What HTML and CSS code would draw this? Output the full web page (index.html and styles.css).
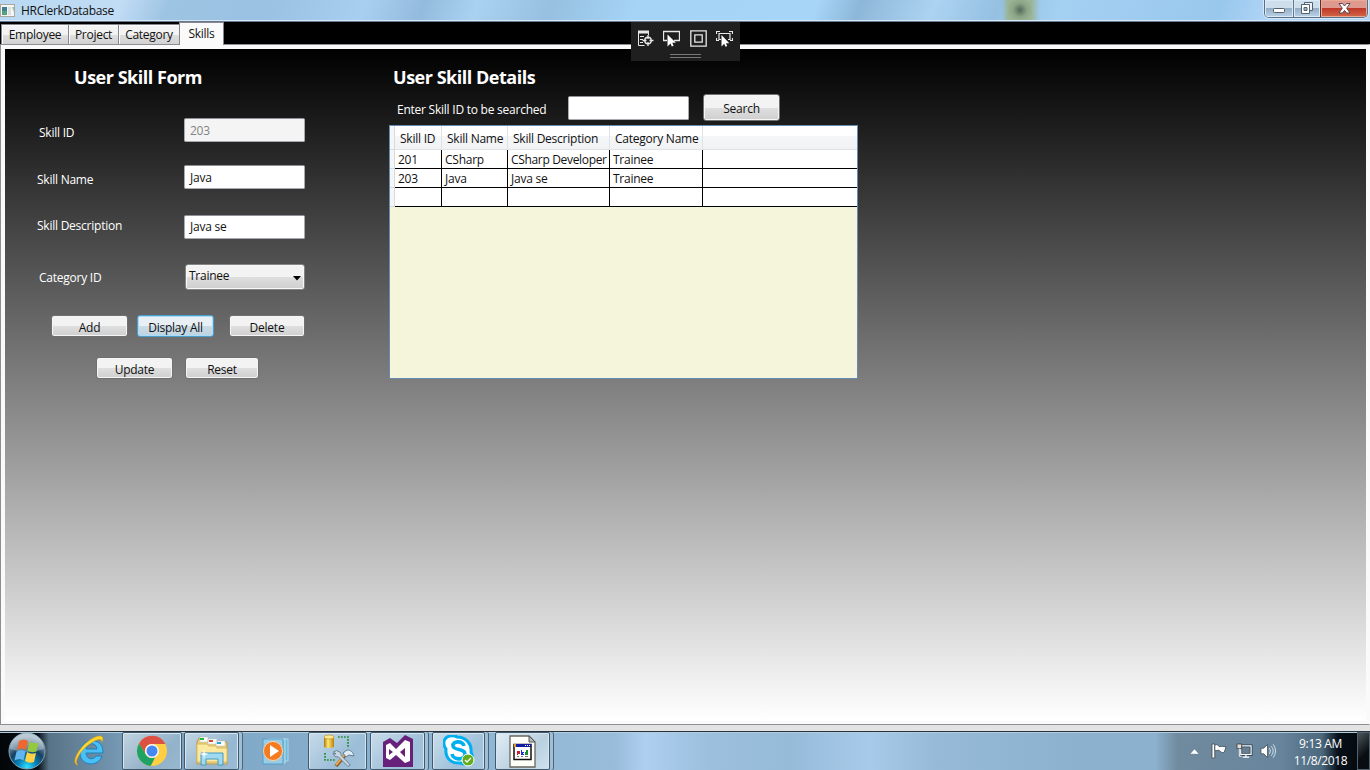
FILE: index.html
```html
<!DOCTYPE html>
<html lang="en">
<head>
<meta charset="utf-8">
<title>HRClerkDatabase</title>
<link rel="stylesheet" href="styles.css">
</head>
<body>
<div class="desktop">
  <header class="titlebar">
    <svg class="app-icon" width="16" height="14" viewBox="0 0 16 14"><rect x=".5" y=".5" width="14" height="12" fill="#f5f5f5" stroke="#aaa79f"/><path d="M2 3h5v8H2z" fill="#3f7f96"/><path d="M2 7h5v4H2z" fill="#52a17f"/><path d="M8 3h3v8H8z" fill="#dedede"/><path d="M12 3h2v5z" fill="#8fc4a6"/></svg>
    <span class="app-title">HRClerkDatabase</span>
    <div class="caption">
      <span class="cap min"><svg width="13" height="6"><rect x=".5" y=".5" width="11" height="4" rx="1" fill="#fff" stroke="#53606e"/></svg></span>
      <span class="cap max"><svg width="12" height="12"><path d="M3.500 3V.5h8v8H9" fill="#eef4fa" stroke="#53606e"/><path d="M.5 2.500h8v9h-8z" fill="#fff" stroke="#53606e"/><path d="M3 5.500h3v3H3z" fill="#9fb2c6" stroke="#53606e"/></svg></span>
      <span class="cap close"><svg width="13" height="11" viewBox="0 0 13 11"><path d="M1 .5h3.500l2 2.500 2-2.500H12L8.700 5.200 12 10H8.500l-2-2.600-2 2.600H1l3.300-4.800z" fill="#fff" stroke="#5b4650"/></svg></span>
    </div>
  </header>

  <nav class="tabs">
    <span class="tab employee">Employee</span><span class="tab project">Project</span><span class="tab category">Category</span><span class="tab active">Skills</span>
  </nav>

  <div class="debugbar">
    <div class="debug-icons">
      <svg width="17" height="17" viewBox="0 0 17 17" fill="none" stroke="#e8e8e8"><path d="M1.500 1v14.500h6M11.500 1v4"/><path d="M1 2h11" stroke-width="3"/><path d="M3 6.500h4M3 9.500h3M3 12.500h3"/><circle cx="11" cy="10.500" r="3.200" stroke-width="1.400"/><path d="M11 5v4M11 12v4M5.500 10.500h4M12.500 10.500h4" stroke-width="1.300"/></svg>
      <svg width="17" height="17" viewBox="0 0 17 17"><path d="M4 10.500H.5v-9h16v9H11" fill="none" stroke="#e8e8e8" stroke-width="1.300"/><path d="M4.500 4.500v12l3-3 1.300 3 1.800-.8-1.300-2.900h3.600z" fill="#fff"/></svg>
      <svg width="17" height="17" viewBox="0 0 17 17" fill="none" stroke="#e8e8e8" stroke-width="1.300"><path d="M.8.800h15.400v15.400H.8zM4.800 4.800h7.400v7.400H4.800z"/></svg>
      <svg width="17" height="17" viewBox="0 0 17 17"><path d="M.5 4V1.500H4M13 1.500h3.500V4M.5 8v2.500H3M16.500 8v2.500H14M5 9.500H3v-6h11v6h-2" fill="none" stroke="#e8e8e8" stroke-width="1.200"/><path d="M5.500 5v11.500l2.700-2.700 1.300 3 1.700-.8-1.300-2.800h3.400z" fill="#fff"/></svg>
    </div>
    <div class="grip"></div>
  </div>

  <main class="tabpage">
    <div class="content">
      <section class="form">
        <h1 class="form-title">User Skill Form</h1>
        <div class="field id"><label class="indent">Skill ID</label><div class="textbox disabled">203</div></div>
        <div class="field name"><label>Skill Name</label><div class="textbox">Java</div></div>
        <div class="field desc"><label>Skill Description</label><div class="textbox">Java se</div></div>
        <div class="field cat"><label class="indent">Category ID</label><div class="combo"><span>Trainee</span><svg width="8" height="5"><path d="M0 0h8L4 4.500z" fill="#000"/></svg></div></div>
        <div class="buttons first"><span class="btn">Add</span><span class="btn hot">Display All</span><span class="btn del">Delete</span></div>
        <div class="buttons second"><span class="btn">Update</span><span class="btn reset">Reset</span></div>
      </section>
      <section class="details">
        <h1 class="details-title">User Skill Details</h1>
        <div class="search"><label>Enter Skill ID to be searched</label><div class="textbox query"></div><span class="btn search-btn">Search</span></div>
        <div class="datagrid">
          <div class="row head"><i></i><span>Skill ID</span><span>Skill Name</span><span>Skill Description</span><span>Category Name</span><span></span></div>
          <div class="row"><i></i><span>201</span><span>CSharp</span><span class="dev">CSharp Developer</span><span>Trainee</span><span></span></div>
          <div class="row"><i></i><span>203</span><span>Java</span><span>Java se</span><span>Trainee</span><span></span></div>
          <div class="row"><i></i><span></span><span></span><span></span><span></span><span></span></div>
        </div>
      </section>
    </div>
  </main>
  <div class="window-edge"></div>

  <footer class="taskbar">
    <div class="start"><svg width="38" height="38" viewBox="0 0 38 38">
      <defs><radialGradient id="orb" cx=".5" cy=".95" r=".85"><stop offset="0" stop-color="#35e2ff"/><stop offset=".3" stop-color="#0784bd"/><stop offset=".6" stop-color="#173f62"/><stop offset="1" stop-color="#a7b9c7"/></radialGradient></defs>
      <circle cx="19" cy="19" r="18" fill="url(#orb)" stroke="#80a4b5"/><path d="M2 17a17 16 0 0 1 34 0q-17 6-34 0z" fill="#d7e3ec" opacity=".4"/>
      <path d="M11 9q5-3 9 0l-2 9q-4-3-9 0z" fill="#ed6830"/><path d="M21.500 9.500q4 3 9 1l-2 9q-5 2-9-1z" fill="#94c83e"/><path d="M8.500 19.500q5-3 9 0l-2 9q-4-3-9 0z" fill="#62b5ed"/><path d="M19 20q4 3 9 1l-2 9q-5 2-9-1z" fill="#ffd245"/>
    </svg></div>
    <div class="task ie"><svg width="34" height="34" viewBox="0 0 34 34"><path d="M30 19H13c.5 7 8 7 10 3h6c-4 12-22 10-22-3C7 3 31 2 30 19zM13 15h11c-.5-7-10-7-11 0z" fill="#48bff5" stroke="#227fba"/><path d="M5 31c-8-1 1-18 12-25 9-6 15-5 12 2 0-4-5-3-11 1C7 16 0 29 5 31z" fill="#ffd52e" stroke="#dfa411" stroke-width=".7"/></svg></div>
    <div class="task framed chrome"><svg width="32" height="32" viewBox="0 0 32 32"><circle cx="16" cy="16" r="15" fill="#ffce43"/><path d="M3 8.500A15 15 0 0 1 29.500 9H16a7 7 0 0 0-6.500 10z" fill="#dc5144"/><path d="M3 8.500 9.900 19.500a7 7 0 0 0 9.400 2.600L14.700 31A15 15 0 0 1 3 8.500z" fill="#1ea362"/><circle cx="16" cy="16" r="7" fill="#f7f7f7"/><circle cx="16" cy="16" r="5.500" fill="#4587f3"/></svg></div>
    <div class="task framed stack explorer"><svg width="34" height="32" viewBox="0 0 34 32"><path d="M2 7l2-4h8l2 2h8l1 2h9v22H2z" fill="#e8cf7c" stroke="#bb9850"/><path d="M5 2h8v5H5zM13 4h9v5h-9zM21 6h9v5h-9z" fill="#fff" stroke="#bbb" stroke-width=".5"/><path d="M5 3h4v2H5z" fill="#19bd36"/><path d="M14 5h4v2h-4z" fill="#db4731"/><path d="M22 7h4v2h-4z" fill="#27a4df"/><path d="M2 9h10l2 2h7l1 2h10v14H2z" fill="#fae99f" stroke="#d8bb66"/><path d="M6 18h22v12h-5v-6H11v6H6z" fill="#9ed9f1" stroke="#459ac2"/><path d="m9 13 .7 5 4 1-4 1-.7 5-.7-5-4-1 4-1z" fill="#fff"/></svg></div>
    <div class="task wmp"><svg width="32" height="30" viewBox="0 0 32 30"><path d="M9 3h18v22H9z" fill="#71b7d8" stroke="#a8d8ed"/><path d="M6 3h18v24H6z" fill="#82c1df" stroke="#b7e0ef"/><path d="M2 3h20v25H2z" fill="#9bcce5" stroke="#549ec8"/><circle cx="12" cy="15" r="9.500" fill="#f47b20" stroke="#ffd3a6"/><path d="m9 9 9 6-9 6z" fill="#fff"/></svg></div>
    <div class="task framed tools"><svg width="34" height="34" viewBox="0 0 34 34"><defs><linearGradient id="gold"><stop stop-color="#ad7605"/><stop offset=".4" stop-color="#ffe779"/><stop offset="1" stop-color="#bd8106"/></linearGradient></defs><path d="M3 3v10q5 2 10 0V3z" fill="url(#gold)"/><ellipse cx="8" cy="3" rx="5" ry="2" fill="#ffe991" stroke="#b58a20" stroke-width=".6"/><path d="M17 3h10v11M4 19v7h11" fill="none" stroke="#248b35" stroke-width="1.700" stroke-dasharray="1.700 1.300"/><path d="m15 32 10-12" stroke="#8a5419" stroke-width="3.500"/><path d="m15 31 10-12" stroke="#e7a84c" stroke-width="2"/><path d="m22 19 4-3c4 0 6 2 7 6l-5-1-3 2z" fill="#ddecf6" stroke="#66788c"/><path d="m12.500 18 3-1.500 4 2 .8 3 9 9.500-2.300 1.500-9.500-9.500-3.500-.5-2-3 3 .5z" fill="#c9d7e2" stroke="#586e84" stroke-width=".8"/></svg></div>
    <div class="task framed stack vs"><svg width="32" height="34" viewBox="0 0 32 34"><path d="M1 8 8 4l7 5L23 1l8 4v28H1z" fill="#68217a"/><path d="M4 11 8 9l6 6 9-9 5 2v19l-5 2-9-8-6 5-4-2zM7 15v6l4-3zm16-1-5 4 5 5z" fill="#fff" fill-rule="evenodd"/></svg></div>
    <div class="task framed stack skype"><svg width="32" height="32" viewBox="0 0 32 32"><path d="M2 4C5 0 11 0 14 2c9 0 15 7 14 15 4 8-3 14-10 11C8 29 2 23 3 14 1 11 0 7 2 4z" fill="#fff" stroke="#00aff0" stroke-width="3"/><path d="M21 11c-1-6-12-5-11 0 1 5 12 2 12 8 0 7-12 6-13 0" fill="none" stroke="#00aff0" stroke-width="3.600"/><circle cx="25" cy="25" r="6" fill="#62ad1c" stroke="#fff"/><path d="m22 25 2 2 4-4" fill="none" stroke="#fff" stroke-width="1.300"/></svg></div>
    <div class="task framed stack current"><svg width="27" height="33" viewBox="0 0 27 33"><path d="M1 1h19l6 6v25H1z" fill="#fffffa" stroke="#686860" stroke-width="1.300"/><path d="M20 1v6h6z" fill="#bbb" stroke="#555"/><path d="M5 9.500h17v15H5z" fill="#fff" stroke="#111" stroke-width="1.500"/><path d="M5 9h17v3H5z" fill="#111ba3"/><path d="M16 10.500h1m1 0h1m1 0h1" stroke="#fff"/><path d="M5 9h2v3H5z" fill="#d3a329"/><path d="M8 16h3v3H9v1H8z" fill="#c91f2c"/><path d="M12 15h1v2h2v1h-1v1h1v1h-3z" fill="#1e2bdb"/><path d="M16 17h1v-2h2v5h-3z" fill="#198c32"/><path d="M8 21.500h2m2 0h2m2 0h3" stroke="#777"/></svg></div>
    <div class="tray">
      <svg class="arrow" width="9" height="5"><path d="M0 5h9L4.500 0z" fill="#fff" stroke="#4b5c69" stroke-width=".3"/></svg>
      <svg class="flag" width="17" height="16" viewBox="0 0 18 17"><path d="M1 1h3v15H1z" fill="#fff" stroke="#49545e"/><path d="M4 2c3-1 4 1 5 2 2-1 4 0 7 0l-2 6c-3 1-4-1-5-2-2-1-3 1-5 0z" fill="#fff" stroke="#49545e"/></svg>
      <svg class="net" width="17" height="16" viewBox="0 0 18 17"><path d="M5 3h11v9H5z" fill="#667f92" stroke="#293d4c" stroke-width="3"/><path d="M5 3h11v9H5zM7 15h7M10.500 12v3" fill="none" stroke="#fff" stroke-width="1.300"/><path d="M1 1h5v5H1z" fill="#ddd" stroke="#444"/><path d="M3.500 6v8H6" fill="none" stroke="#fff"/></svg>
      <svg class="sound" width="17" height="16" viewBox="0 0 18 16"><path d="M1 5h3l4-4v14l-4-4H1z" fill="#fff" stroke="#4f5b66"/><path d="M10 5q2 3 0 6M12 3q4 5 0 10M14 1q5 7 0 14" fill="none" stroke="#dce7ee"/></svg>
      <div class="clock"><span>9:13 AM</span><span>11/8/2018</span></div>
      <div class="show-desktop"></div>
    </div>
  </footer>
</div>
</body>
</html>
```
FILE: styles.css
```css
* { box-sizing: border-box; }
body { margin: 0; font: 12px/16px "Open Sans", "Noto Sans", sans-serif; letter-spacing: -0.24px; color: #111; }
svg { display: block; flex: none; }
h1, label { margin: 0; white-space: nowrap; }
.desktop { position: relative; width: 1370px; height: 770px; overflow: hidden; display: flex; flex-direction: column; background: #000; }
.titlebar {
  height: 22px; flex: none; display: flex;
  border-bottom: 1px solid #667b93; box-shadow: inset 0 -1px #d9e8f7;
  background:
    radial-gradient(circle at 1020px 10px, #52695a 0, #8ca486 7px, transparent 13px),
    linear-gradient(90deg, transparent 1002px, #9ab595 1008px, #9ab595 1031px, transparent 1040px),
    radial-gradient(ellipse at 1050px 13px, #779fcf 0, transparent 12px),
    linear-gradient(110deg, #b9d8f1 0, #c1dcf5 115px, #9ec4e3 160px, #9bc1e3 260px, #a9cff0 345px, #93bbdd 400px, #a9d1f0 450px, #97c0e0 520px, #a5d4f6 600px, #a6d5f7 770px, #8db7d9 810px, #acd3f1 880px, #95c0e2 940px, #a4d0f2 1000px, #99c8ed 1150px, #b1d5f6 1200px, #b3d4f4 1370px);
}
.app-icon { margin-top: 4px; }
.app-title { margin: 3px 0 0 5px; letter-spacing: -.31px; }
.caption { margin-left: auto; margin-right: 2px; width: 104px; height: 18px; display: flex; border: 1px solid #596f86; border-top: 0; border-radius: 0 0 5px 5px; overflow: hidden; box-shadow: 0 0 0 1px #d6e8fa; }
.cap { display: flex; align-items: center; justify-content: center; background: linear-gradient(#cedeeb 0 45%, #91abc3 46%, #bbd2e8); box-shadow: inset 0 0 0 1px #dbeaf7; }
.min { width: 28px; padding-top: 4px; }
.max { width: 27px; border-left: 1px solid #61768b; padding-bottom: 2px; }
.close { flex: 1; border-left: 1px solid #642e2d; background: linear-gradient(#df9a8f 0 45%, #bd3527 46%, #d36848); box-shadow: inset 0 0 0 1px #eaa994; padding-bottom: 1px; }
.tabs { height: 22px; flex: none; display: flex; align-items: flex-end; padding-left: 1px; }
.tab { height: 20px; border: 1px solid #85878d; border-bottom: 0; background: linear-gradient(#f3f3f3 0 50%, #dfdfdf 51%, #d1d1d1); box-shadow: inset 1px 1px #fbfbfb; text-align: center; padding-top: 2px; letter-spacing: -.27px; }
.employee { width: 68px; }
.project { width: 51px; margin-left: -1px; }
.category { width: 62px; margin-left: -1px; }
.tab.active { width: 45px; height: 23px; margin: 0 0 -1px -1px; background: #fafafa; padding-top: 3px; z-index: 1; }
.debugbar { position: absolute; z-index: 3; left: 631px; top: 22px; width: 109px; height: 39px; background: #1f1f1f; padding: 8px 7px 0 6px; }
.debug-icons { display: flex; justify-content: space-between; }
.grip { width: 31px; height: 4px; margin: 7px auto 0; border-top: 1px solid #777; border-bottom: 1px solid #777; }
.tabpage { height: 681px; flex: none; border: 1px solid #8c8e94; border-right-color: #fafafa; background: #fafafa; padding: 4px 3px 3px 4px; }
.content { height: 672px; display: flex; background: linear-gradient(#000, #fff); }
.window-edge { height: 6px; flex: none; background: #e3e3e3; }
.form { width: 384px; flex: none; display: flex; flex-direction: column; color: #fff; }
.form-title, .details-title { font-size: 18px; line-height: 24px; font-weight: 700; color: #fff; letter-spacing: -.48px; }
.form-title { margin: 16px 0 0 69px; }
.field { display: flex; padding-left: 32px; height: 24px; }
.field label { width: 147px; padding-top: 7px; }
.field .indent { padding-left: 2px; }
.id { margin-top: 29px; }
.name { margin-top: 23px; }
.desc { margin-top: 26px; }
.desc label { padding-top: 3px; }
.cat { margin-top: 25px; height: 26px; }
.cat label { padding-top: 6px; }
.textbox { width: 121px; height: 24px; border: 1px solid #a7abb0; border-top-color: #8d9197; border-radius: 2px; background: #fff; color: #111; padding: 4px 5px; }
.desc .textbox { padding-top: 3px; }
.textbox.disabled { background: #f4f4f4; color: #838383; }
.combo { width: 120px; margin-left: 1px; height: 26px; display: flex; justify-content: space-between; padding: 3px 3px 0 3px; border: 1px solid #858585; border-radius: 3px; color: #111; background: linear-gradient(#f3f3f3 0 50%, #dedede 51%, #cecece); box-shadow: inset 0 0 0 1px #f8f8f8; }
.combo svg { margin-top: 8px; }
.buttons { display: flex; }
.first { margin: 25px 0 0 46px; }
.second { margin: 20px 0 0 91px; }
.btn { width: 77px; height: 22px; flex: none; border: 1px solid #707070; border-radius: 3px; background: linear-gradient(#f3f3f3 0 50%, #dfdfdf 51%, #cfcfcf); box-shadow: inset 0 0 0 1px #f5f5f5; color: #111; text-align: center; padding-top: 3px; }
.buttons .btn { padding-top: 4px; }
.hot { margin-left: 9px; border-color: #4d9ccc; box-shadow: inset 0 0 0 1px #a9ddfa; background: linear-gradient(#e9f0f5 0 50%, #cadbe5 51%, #bfd3df); }
.del { width: 76px; margin-left: 15px; }
.reset { width: 74px; margin-left: 12px; }
.details { width: 469px; flex: none; }
.details-title { margin: 16px 0 0 4px; }
.search { height: 36px; display: flex; padding: 5px 0 0 8px; color: #fff; }
.search label { width: 171px; padding-top: 8px; }
.query { margin-top: 2px; height: 24px; }
.search-btn { margin-left: 14px; height: 27px; padding-top: 6px; }
.datagrid { height: 254px; border: 1px solid #688caf; background: #f5f5dc; }
.row { height: 19px; display: grid; grid-template-columns: 5px 47px 66px 102px 93px 1fr; line-height: 18px; background: #fff; }
.row span, .row i { white-space: nowrap; border-bottom: 1px solid #000; }
.row i { background: #f5f6f8; border-right: 1px solid #d5dbe1; border-bottom-color: #d4d9df; }
.row span { height: 19px; padding: 1px 0 0 3px; border-right: 1px solid #000; }
.row .dev { letter-spacing: -.33px; }
.row span:last-child { border-right: 0; }
.row.head { height: 24px; background: linear-gradient(#fff 0 40%, #f5f6f8 41%, #f0f2f4); }
.row.head span { height: 24px; padding: 4px 0 0 5px; border-color: #dfe2e6; }
.taskbar {
  height: 39px; flex: none; display: flex; border-top: 1px solid #26333e; box-shadow: inset 0 1px #b4cddd;
  background: linear-gradient(90deg, #030608 0, #071019 38px, #587386 49px, #7598b3 120px, #81a9c8 245px, #8fb6d3 470px, #98bcda 615px, #afcff0 645px, #9bbfdd 710px, #96bbd9 790px, #a8caea 870px, #96bad7 935px, #8bb1ce 1080px, #8cb1cf 1155px, #708a9e 1178px, #67859d 1280px, #4c687d 1322px, #071019 1338px, #020609 1370px);
}
.start { width: 53px; padding-left: 8px; }
.task { display: flex; justify-content: center; align-items: center; flex: none; }
.framed { border: 1px solid #415a6d; border-radius: 2px; box-shadow: inset 1px 1px #d6e5ef, inset -1px 0 #d6e5ef; background: linear-gradient(135deg, rgba(235,244,250,.65), rgba(196,218,234,.32) 65%, rgba(200,223,240,.38)); }
.stack { box-shadow: inset 1px 1px #d6e5ef, inset -1px 0 #d6e5ef, 3px 0 #9fbfd5, 4px 0 #4d6579; }
.ie { width: 69px; padding-left: 4px; }
.chrome { width: 60px; }
.explorer { width: 55px; margin-left: 2px; }
.wmp { width: 66px; margin-left: 4px; padding-left: 2px; }
.tools { width: 59px; margin-left: -1px; }
.vs { width: 55px; margin-left: 3px; }
.skype { width: 53px; margin-left: 7px; }
.current { width: 55px; margin-left: 10px; background: linear-gradient(135deg, #e1edf5, #b9d0e0 60%, #d0e1ee); }
.tray { margin-left: auto; display: flex; align-items: center; color: #fff; }
.flag { margin-left: 12px; }
.net { margin-left: 8px; }
.sound { margin-left: 7px; }
.clock { width: 63px; margin-left: 12px; margin-right: 5px; display: flex; flex-direction: column; text-align: center; line-height: 17px; padding-top: 1px; letter-spacing: -.35px; }
.show-desktop { width: 13px; height: 38px; border: 1px solid #52616b; background: linear-gradient(135deg, #4c565c, #080d11 60%); }
```
